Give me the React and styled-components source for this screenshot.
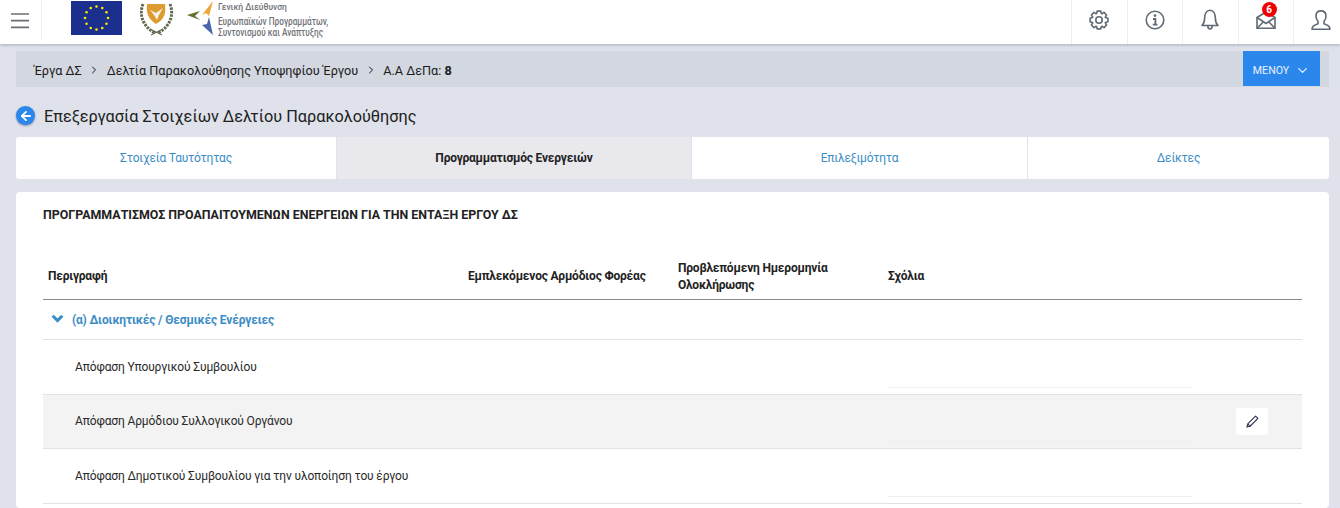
import React from "react";
import styled, { createGlobalStyle } from "styled-components";
import { ChevronDown, ChevronRight, ArrowLeft } from "lucide-react";

const GlobalStyle = createGlobalStyle`
    html, body {
        margin: 0;
        padding: 0;
        height: 508px;
        overflow: hidden;
        background-color: #DFE2EB;
        font-family: Roboto, "Liberation Sans", sans-serif;
    }
`;

const abas = [
    { nome: "Στοιχεία Ταυτότητας", largura: 320 },
    { nome: "Προγραμματισμός Ενεργειών", largura: 354, ativa: true },
    { nome: "Επιλεξιμότητα", largura: 335 },
    { nome: "Δείκτες", largura: 301 },
];

const linhas = [
    { nome: "Απόφαση Υπουργικού Συμβουλίου" },
    { nome: "Απόφαση Αρμόδιου Συλλογικού Οργάνου", destaque: true },
    { nome: "Απόφαση Δημοτικού Συμβουλίου για την υλοποίηση του έργου" },
];

const corIcone = "#5E6A75";

function Estrelas() {
    const estrelas = [];
    for (let i = 0; i < 12; i++) {
        const a = (i * Math.PI) / 6;
        estrelas.push(<circle key={i} cx={25.5 + 11.5 * Math.sin(a)} cy={17 - 11.5 * Math.cos(a)} r="1.3" fill="#FFE600" />);
    }
    return (
        <svg width="51" height="34" viewBox="0 0 51 34">
            <rect width="51" height="34" fill="#1B2F8E" />
            {estrelas}
        </svg>
    );
}

function Brasao() {
    return (
        <svg width="34" height="35" viewBox="0 0 34 35">
            <path d="M7 3h18c1 9 0 15-9 20C8 18 6 12 7 3z" fill="#DE9B30" />
            <path d="M10 9l6 3 7-5-4 7-2 5-3-5z" fill="#F6F1E6" />
            <path d="M3 3C-1 13 2 25 15 32M30 3c4 10 1 22-12 29" fill="none" stroke="#5F6B4E" strokeWidth="3" strokeDasharray="2.5 1" />
            <path d="M11 34l10-5M22 34l-10-5" stroke="#4E5A42" strokeWidth="1" />
        </svg>
    );
}

function LogoSeta() {
    return (
        <svg width="32" height="36" viewBox="0 0 32 36">
            <path d="M1 15l13-4-5 5 5 4z" fill="#66702F" />
            <path d="M16 15L27 1l-4 15-3-3z" fill="#F0A537" />
            <path d="M16 25l5-1 2-7 4 18z" fill="#4A66B0" />
        </svg>
    );
}

function IconeHamburguer() {
    return (
        <svg width="18" height="16" viewBox="0 0 18 16" stroke="#6B6F75" strokeWidth="1.6">
            <path d="M0 1h18M0 7.6h18M0 14.4h18" />
        </svg>
    );
}

function IconeEngrenagem() {
    // 8 dentes em volta do centro
    let d = "";
    for (let i = 0; i < 8; i++) {
        const base = (i * Math.PI) / 4 - Math.PI / 2;
        const pontos = [
            [6.9, base - 0.36],
            [9.1, base - 0.2],
            [9.1, base + 0.2],
            [6.9, base + 0.36],
        ];
        pontos.forEach(([r, a], j) => {
            const x = (10 + r * Math.cos(a)).toFixed(2);
            const y = (10 + r * Math.sin(a)).toFixed(2);
            d += `${i === 0 && j === 0 ? "M" : "L"}${x} ${y}`;
        });
    }
    return (
        <svg width="20" height="20" viewBox="0 0 20 20" fill="none" stroke={corIcone} strokeWidth="1.6" strokeLinejoin="round">
            <path d={d + "z"} />
            <circle cx="10" cy="10" r="3.2" />
        </svg>
    );
}

function IconeInfo() {
    return (
        <svg width="20" height="20" viewBox="0 0 20 20" fill="none" stroke={corIcone} strokeWidth="1.6">
            <circle cx="10" cy="10" r="8.8" />
            <circle cx="10" cy="5.6" r="0.6" fill={corIcone} />
            <path d="M8 9h2.4v5.2M7.8 14.6h4.6" strokeWidth="1.8" />
        </svg>
    );
}

function IconeSino() {
    return (
        <svg width="18" height="21" viewBox="0 0 18 21" fill="none" stroke={corIcone} strokeWidth="1.6" strokeLinejoin="round">
            <path d="M1 16.5c2-2 2.6-3.6 2.6-7C3.6 5 5.5 1.2 9 1.2s5.4 3.8 5.4 8.3c0 3.4.6 5 2.6 7z" />
            <path d="M6.8 16.8c0 2 1 3.2 2.2 3.2s2.2-1.2 2.2-3.2" />
        </svg>
    );
}

function IconeCarta() {
    return (
        <svg width="20" height="18" viewBox="0 0 20 18" fill="none" stroke={corIcone} strokeWidth="1.6">
            <path d="M1 6.5L10 1l9 5.5v10.7H1z" />
            <path d="M1 6.5l9 6 9-6M1 17.2l6.5-6.5M19 17.2l-6.5-6.5" />
        </svg>
    );
}

function IconeUsuario() {
    return (
        <svg width="20" height="20" viewBox="0 0 20 20" fill="none" stroke={corIcone} strokeWidth="1.6" strokeLinejoin="round">
            <path d="M1 19.2h18c0-3-2-4.2-6-5.4v-2.4c1.4-1.4 2-3.2 2-5.4C15 3 13 .9 10 .9S5 3 5 6c0 2.2.6 4 2 5.4v2.4c-4 1.2-6 2.4-6 5.4z" />
        </svg>
    );
}

function IconeLapis() {
    return (
        <svg width="13" height="13" viewBox="0 0 14 14" fill="none" stroke="#2C3550" strokeWidth="1.2" strokeLinejoin="round">
            <path d="M1 13l.9-3.4L10.3 1.2l2.5 2.5-8.4 8.4z" />
            <path d="M1.9 9.6l2.5 2.5" />
        </svg>
    );
}

export default function App() {
    return (
        <>
            <GlobalStyle />
            <Topo>
                <BotaoMenu><IconeHamburguer /></BotaoMenu>
                <Logos>
                    <Estrelas />
                    <Brasao />
                    <LogoTexto>
                        <LogoSeta />
                        <LogoLinhas>
                            <small>Γενική Διεύθυνση</small>
                            <span>Ευρωπαϊκών Προγραμμάτων,</span>
                            <span>Συντονισμού και Ανάπτυξης</span>
                        </LogoLinhas>
                    </LogoTexto>
                </Logos>
                <Acoes>
                    <Acao><IconeEngrenagem /></Acao>
                    <Acao><IconeInfo /></Acao>
                    <Acao><IconeSino /></Acao>
                    <Acao>
                        <IconeCarta />
                        <Contador>6</Contador>
                    </Acao>
                    <Acao><IconeUsuario /></Acao>
                </Acoes>
            </Topo>
            <Conteudo>
                <Breadcrumb>
                    <Trilha>
                        <span>Έργα ΔΣ</span>
                        <ChevronRight size={12} strokeWidth={2} />
                        <span>Δελτία Παρακολούθησης Υποψηφίου Έργου</span>
                        <ChevronRight size={12} strokeWidth={2} />
                        <span>Α.Α ΔεΠα: <b>8</b></span>
                    </Trilha>
                    <BotaoAzul>ΜΕΝΟΥ <ChevronDown size={15} strokeWidth={2} /></BotaoAzul>
                </Breadcrumb>
                <Titulo>
                    <Voltar><ArrowLeft size={14} strokeWidth={3.2} color="white" /></Voltar>
                    <TextoTitulo>Επεξεργασία Στοιχείων Δελτίου Παρακολούθησης</TextoTitulo>
                </Titulo>
                <Abas>
                    {abas.map((aba) => (
                        <Aba key={aba.nome} $largura={aba.largura} $ativa={aba.ativa}>{aba.nome}</Aba>
                    ))}
                </Abas>
                <Cartao>
                    <TituloCartao>ΠΡΟΓΡΑΜΜΑΤΙΣΜΟΣ ΠΡΟΑΠΑΙΤΟΥΜΕΝΩΝ ΕΝΕΡΓΕΙΩΝ ΓΙΑ ΤΗΝ ΕΝΤΑΞΗ ΕΡΓΟΥ ΔΣ</TituloCartao>
                    <Tabela>
                        <Cabecalho>
                            <span>Περιγραφή</span>
                            <span>Εμπλεκόμενος Αρμόδιος Φορέας</span>
                            <span>Προβλεπόμενη Ημερομηνία Ολοκλήρωσης</span>
                            <span>Σχόλια</span>
                        </Cabecalho>
                        <Grupo>
                            <SetaGrupo viewBox="0 0 12 8">
                                <path d="M1.5 1.5L6 6l4.5-4.5" fill="none" stroke="#3C8DC5" strokeWidth="2.8" />
                            </SetaGrupo>
                            (α) Διοικητικές / Θεσμικές Ενέργειες
                        </Grupo>
                        {linhas.map((linha) => (
                            <Linha key={linha.nome} $destaque={linha.destaque}>
                                <Descricao>{linha.nome}</Descricao>
                                <Comentario />
                                {linha.destaque && (
                                    <BotaoEditar><IconeLapis /></BotaoEditar>
                                )}
                            </Linha>
                        ))}
                    </Tabela>
                </Cartao>
            </Conteudo>
        </>
    );
}

const Topo = styled.header`
    height: 44px;
    background-color: white;
    display: flex;
    align-items: stretch;
    box-shadow: 0 1px 3px rgba(70, 80, 100, 0.35);
    position: relative;
    overflow-x: clip;
`;

const BotaoMenu = styled.div`
    width: 42px;
    display: flex;
    align-items: center;
    justify-content: center;
    border-right: 1px solid #F0F0F0;
    margin-bottom: 3px;
    padding-right: 2px;
    box-sizing: border-box;
`;

const Logos = styled.div`
    display: flex;
    align-items: flex-start;
    padding: 1px 0 0 29px;
    gap: 18px;
    flex: 1;
`;

const LogoTexto = styled.div`
    display: flex;
    align-items: flex-start;
    margin-left: -6px;
    margin-top: -1px;
`;

const LogoLinhas = styled.div`
    display: flex;
    flex-direction: column;
    font-size: 11px;
    line-height: 11px;
    font-weight: 500;
    color: #6F7378;
    white-space: nowrap;
    small {
        font-size: 8.5px;
        line-height: 10px;
        margin: 2px 0 4px;
    }
    span {
        display: block;
        transform: scaleX(0.75);
        transform-origin: left center;
    }
`;

const Acoes = styled.div`
    display: flex;
    margin-right: -8.5px;
`;

const Acao = styled.div`
    width: 55.5px;
    display: flex;
    align-items: center;
    justify-content: center;
    border-left: 1px solid #EEEEEE;
    position: relative;
    padding-bottom: 5px;
    box-sizing: border-box;
`;

const Contador = styled.span`
    position: absolute;
    top: 2px;
    left: 23px;
    width: 15px;
    height: 15px;
    border-radius: 50%;
    background-color: #F00000;
    color: white;
    font-size: 10px;
    font-weight: 700;
    display: flex;
    align-items: center;
    justify-content: center;
`;

const Conteudo = styled.main`
    padding: 7px 11px 0 16px;
`;

const Breadcrumb = styled.nav`
    height: 36px;
    background-color: #D3D7E0;
    display: flex;
    align-items: flex-start;
    justify-content: space-between;
    padding: 0 9px 0 18px;
`;

const Trilha = styled.div`
    display: flex;
    align-items: center;
    gap: 6.5px;
    height: 38px;
    font-size: 12.7px;
    color: #1B1B1B;
    b {
        font-weight: 700;
    }
`;

const BotaoAzul = styled.button`
    width: 77px;
    height: 35px;
    border: none;
    background-color: #2B87EC;
    color: #EAF2FF;
    font-family: inherit;
    font-size: 10.6px;
    display: flex;
    align-items: center;
    justify-content: center;
    gap: 6px;
    padding: 3px 0 0;
`;

const Titulo = styled.h1`
    margin: 17px 0 0;
    height: 23px;
    font-size: 16.25px;
    font-weight: 400;
    color: #212121;
    display: flex;
    align-items: center;
    gap: 9px;
`;

const TextoTitulo = styled.span`
    margin-top: 2px;
`;

const Voltar = styled.span`
    width: 19px;
    height: 19px;
    border-radius: 50%;
    background-color: #2B87EC;
    display: flex;
    align-items: center;
    justify-content: center;
    box-shadow: 0 1px 2px rgba(40, 50, 90, 0.5);
`;

const Abas = styled.div`
    display: flex;
    height: 42px;
    margin-top: 10px;
    gap: 1px;
    border-radius: 3px;
    overflow: hidden;
`;

const Aba = styled.div`
    width: ${(props) => props.$largura}px;
    flex: none;
    display: flex;
    align-items: center;
    justify-content: center;
    font-size: 12px;
    letter-spacing: -0.2px;
    font-weight: ${(props) => (props.$ativa ? 700 : 400)};
    color: ${(props) => (props.$ativa ? "#222222" : "#3C8DC5")};
    background-color: ${(props) => (props.$ativa ? "#E9E8ED" : "white")};
`;

const Cartao = styled.section`
    margin-top: 13px;
    height: 316px;
    box-sizing: border-box;
    overflow: hidden;
    background-color: white;
    border-radius: 4px;
    padding: 16px 27px 0;
`;

const TituloCartao = styled.h2`
    margin: 0;
    font-size: 12.4px;
    line-height: 14px;
    font-weight: 700;
    color: #222222;
`;

const Tabela = styled.div`
    margin-top: 32px;
`;

const Cabecalho = styled.div`
    display: grid;
    grid-template-columns: 420px 210px 210px 1fr;
    align-items: center;
    height: 45px;
    padding-left: 5px;
    border-bottom: 1px solid #8A8A8A;
    font-size: 12px;
    letter-spacing: -0.2px;
    line-height: 17px;
    font-weight: 700;
    color: #222222;
`;

const Grupo = styled.div`
    height: 39px;
    display: flex;
    align-items: center;
    padding-left: 8px;
    gap: 8px;
    border-bottom: 1px solid #E2E2E2;
    font-size: 12px;
    letter-spacing: -0.17px;
    font-weight: 700;
    color: #3C8DC5;
`;

const SetaGrupo = styled.svg`
    width: 13px;
    height: 9px;
    margin-bottom: 3px;
`;

const Linha = styled.div`
    height: 54.6px;
    box-sizing: border-box;
    display: flex;
    align-items: center;
    position: relative;
    border-bottom: 1px solid #E2E2E2;
    background-color: ${(props) => (props.$destaque ? "#F3F3F3" : "white")};
`;

const Descricao = styled.span`
    margin-left: 32px;
    font-size: 12px;
    letter-spacing: -0.14px;
    color: #2A2A2A;
`;

const Comentario = styled.span`
    position: absolute;
    left: 845px;
    bottom: 6px;
    width: 304px;
    border-bottom: 1px solid #EEEEEE;
`;

const BotaoEditar = styled.span`
    position: absolute;
    left: 1193px;
    top: 13px;
    width: 32px;
    height: 27px;
    border-radius: 3px;
    background-color: white;
    display: flex;
    align-items: center;
    justify-content: center;
`;
